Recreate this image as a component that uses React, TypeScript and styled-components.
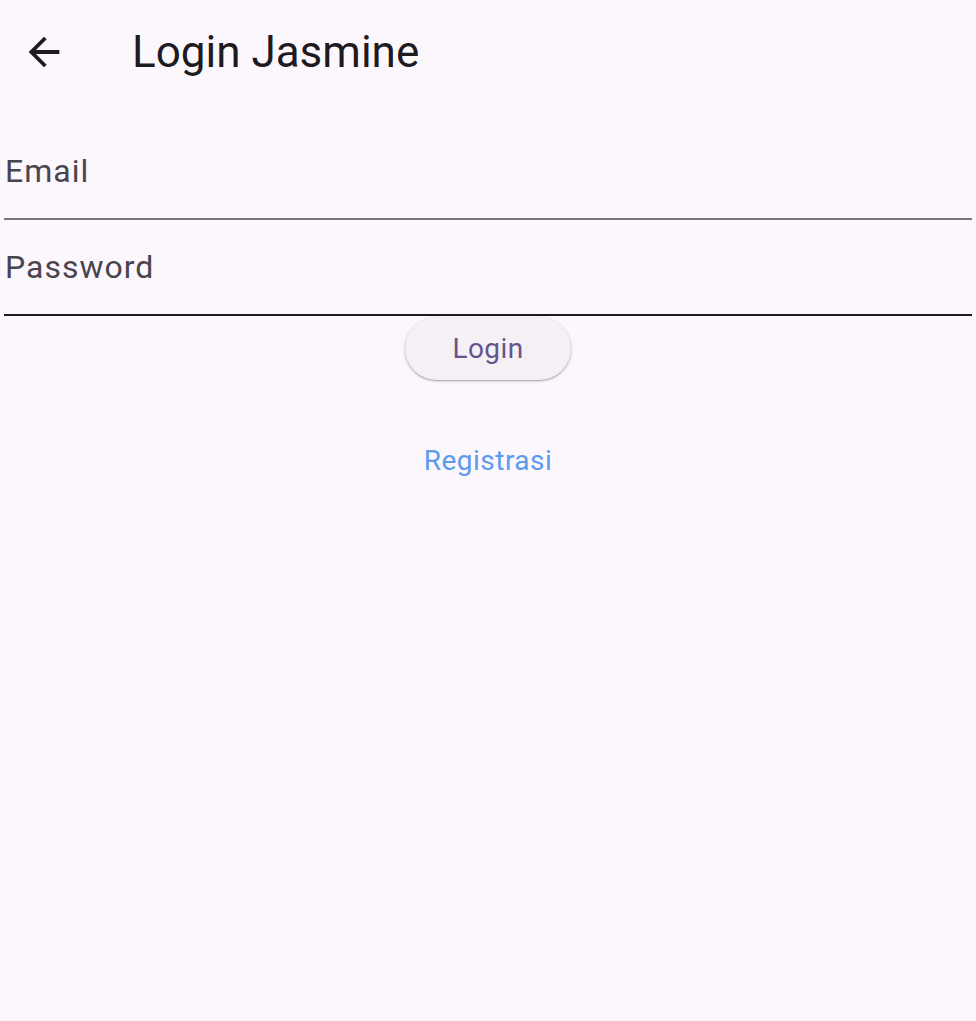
import React from "react";
import styled, { createGlobalStyle } from "styled-components";

const GlobalStyle = createGlobalStyle`
  html, body {
    margin: 0;
    padding: 0;
    background: #fcf7fd;
  }
  body {
    font-family: Roboto, "Noto Sans", "Liberation Sans", sans-serif;
  }
`;

const Page = styled.div`
  min-height: 1021px;
  background: #fcf7fd;
  display: flex;
  flex-direction: column;
`;

const AppBar = styled.header`
  height: 104px;
  display: flex;
  align-items: center;
  padding-left: 21px;
  gap: 65px;
`;

const BackButton = styled.button`
  width: 46px;
  height: 46px;
  padding: 0;
  border: none;
  background: transparent;
  display: flex;
  align-items: center;
  justify-content: center;
  color: #1d1b20;
  cursor: pointer;
`;

const Title = styled.h1`
  margin: 0;
  font-family: Roboto, sans-serif;
  font-weight: 400;
  font-size: 44px;
  line-height: 44px;
  color: #1d1b20;
`;

const Form = styled.main`
  padding: 20px 4px 0;
  display: flex;
  flex-direction: column;
`;

const Field = styled.label<{ $strong?: boolean }>`
  display: block;
  height: 94px;
  border-bottom: 2px solid ${(p) => (p.$strong ? "#1d1b20" : "#79747e")};
`;

const FieldLabel = styled.span<{ $top: number }>`
  display: block;
  padding-top: ${(p) => p.$top}px;
  padding-left: 1px;
  font-family: Roboto, sans-serif;
  font-size: 32px;
  line-height: 32px;
  letter-spacing: 1px;
  color: #49454f;
`;

const Actions = styled.div`
  display: flex;
  flex-direction: column;
  align-items: center;
`;

const LoginButton = styled.button`
  margin-top: 1px;
  width: 166px;
  height: 63px;
  border: none;
  border-radius: 32px;
  background: #f4f0f6;
  box-shadow: 0 1px 3px rgba(0, 0, 0, 0.28), 0 1px 1px rgba(0, 0, 0, 0.12);
  font-family: Roboto, sans-serif;
  font-size: 28px;
  line-height: 28px;
  letter-spacing: 0.4px;
  color: #65558f;
  cursor: pointer;
`;

const LinkButton = styled.button`
  margin-top: 67px;
  padding: 0;
  border: none;
  background: transparent;
  font-family: Roboto, sans-serif;
  font-size: 28px;
  line-height: 28px;
  letter-spacing: 0.5px;
  color: #5a9bef;
  cursor: pointer;
`;

const ArrowBack = () => (
  <svg width="46" height="46" viewBox="0 0 24 24" fill="currentColor">
    <path d="M20 11H7.83l5.59-5.59L12 4l-8 8 8 8 1.41-1.41L7.83 13H20v-2z" />
  </svg>
);

export default function App() {
  return (
    <>
      <GlobalStyle />
      <Page>
        <AppBar>
          <BackButton aria-label="Back">
            <ArrowBack />
          </BackButton>
          <Title>Login Jasmine</Title>
        </AppBar>
        <Form>
          <Field>
            <FieldLabel $top={31}>Email</FieldLabel>
          </Field>
          <Field $strong>
            <FieldLabel $top={31}>Password</FieldLabel>
          </Field>
          <Actions>
            <LoginButton>Login</LoginButton>
            <LinkButton>Registrasi</LinkButton>
          </Actions>
        </Form>
      </Page>
    </>
  );
}
